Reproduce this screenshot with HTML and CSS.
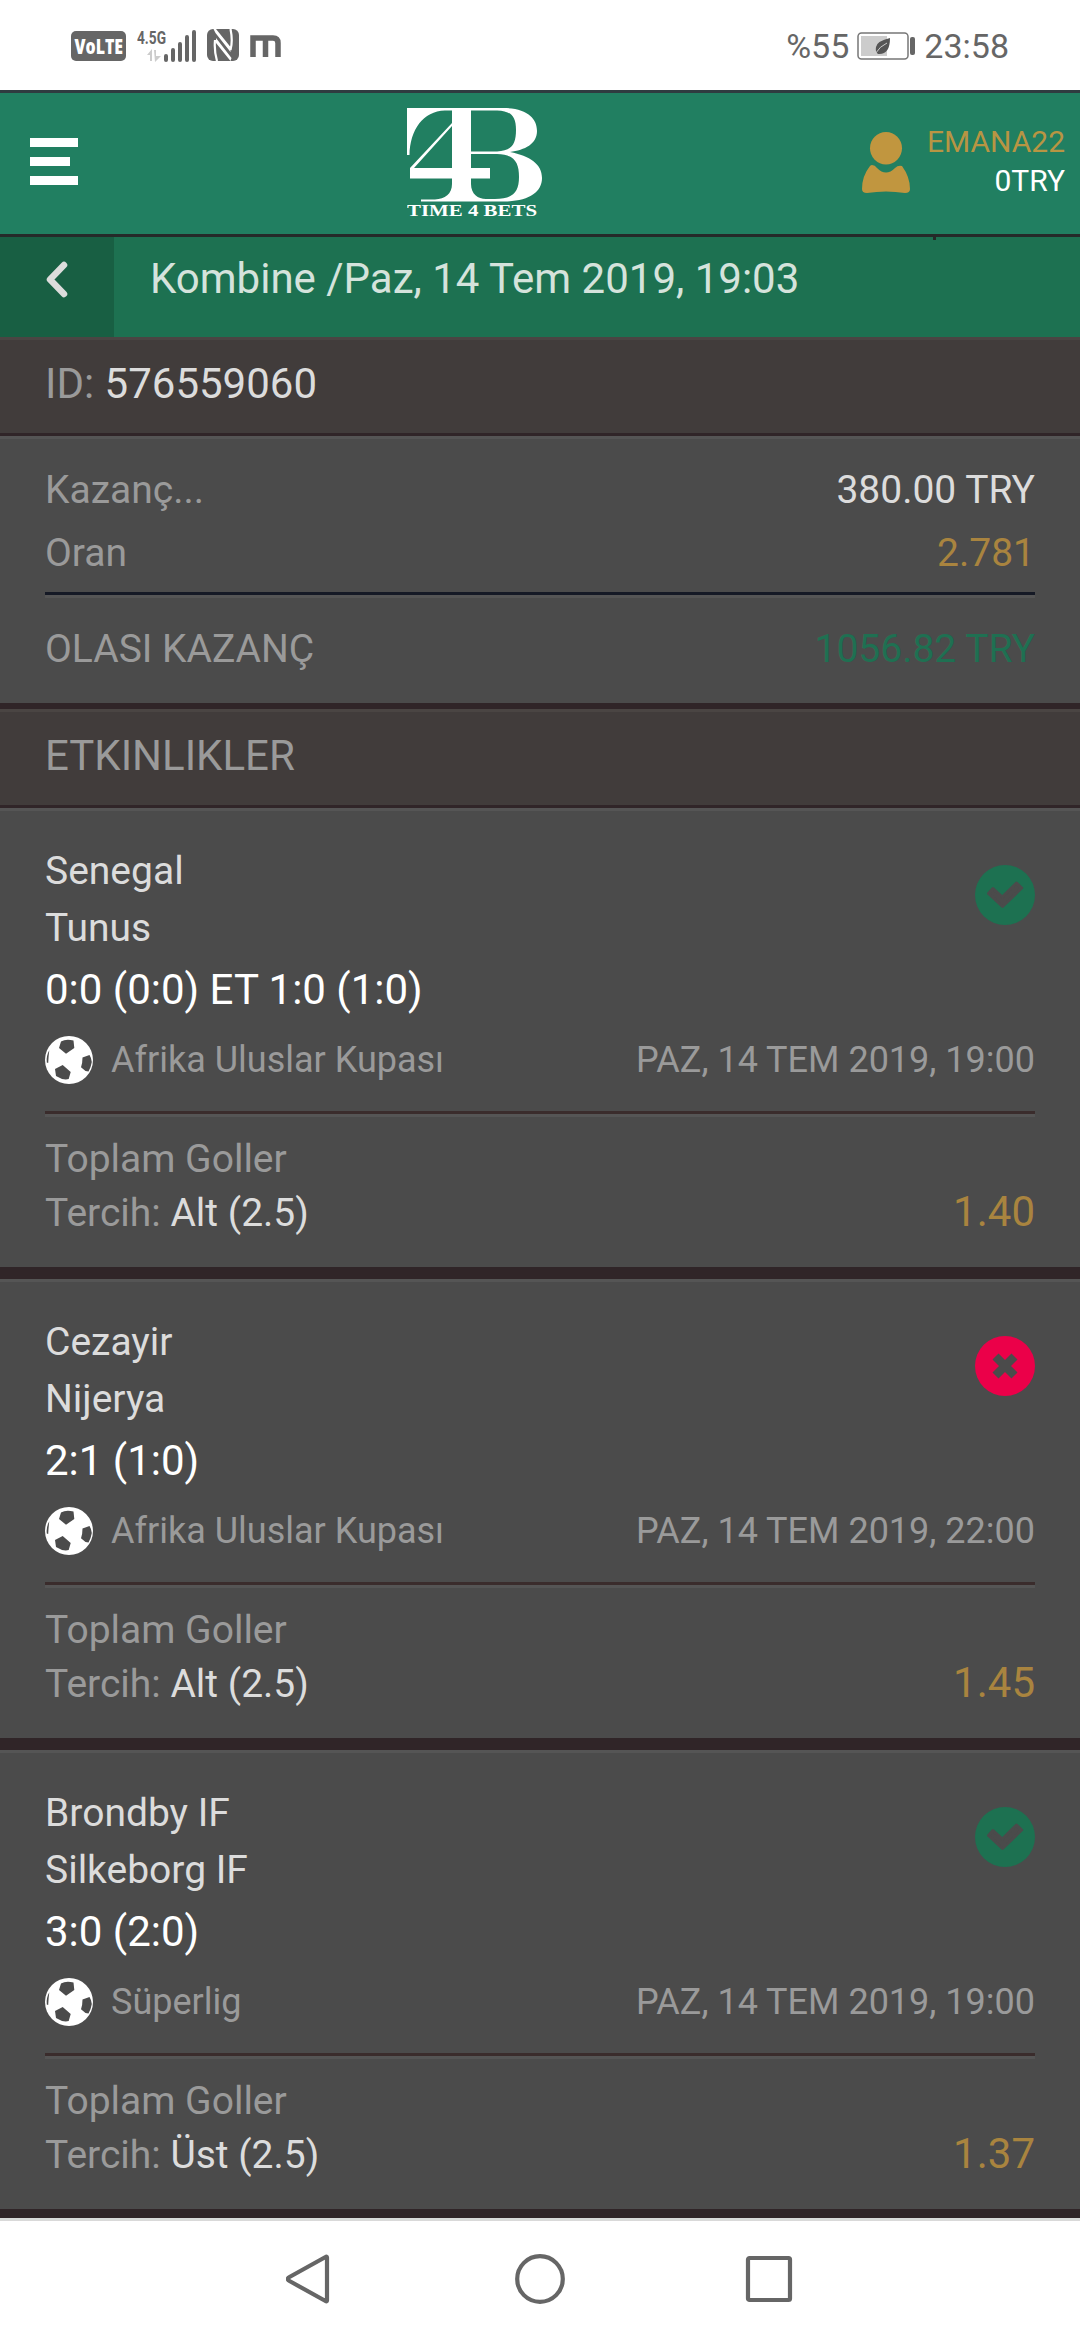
FILE: index.html
```html
<!DOCTYPE html>
<html lang="tr">
<head>
<meta charset="utf-8">
<title>Kombine</title>
<link rel="stylesheet" href="styles.css">
</head>
<body>
<svg class="defs" aria-hidden="true">
  <symbol id="ball" viewBox="0 0 48 48">
    <circle cx="24" cy="24" r="24" fill="#fff"/>
    <path d="M14 12L16 5.500Q21 2.500 28.500 4.500L29.300 12L21 17.700ZM37.500 21.500L44.500 19Q46.500 22 46.800 26Q46 31 43.500 35.500L40.500 35L36 31.300Q37.500 27 37.500 21.500ZM10 33L17.700 29L25.700 36L23.700 43Q18 44.500 11 40ZM4.300 14.300Q3.500 20 3.200 27L1.800 26.500Q1 20 4.300 14.300Z" fill="#4b4b4b"/>
  </symbol>
  <symbol id="won" viewBox="0 0 60 60">
    <circle cx="30" cy="30" r="30" fill="#1d7151"/>
    <path d="M13.500 28.500L18 23.500L27.300 32L41.500 18L46.700 23L27.500 41.500Z" fill="#4b4b4b" stroke="#4b4b4b" stroke-width="3" stroke-linejoin="round"/>
  </symbol>
  <symbol id="lost" viewBox="0 0 60 60">
    <circle cx="30" cy="30" r="30" fill="#eb0049"/>
    <path d="M20.500 20.500L39.500 39.500M39.500 20.500L20.500 39.500" stroke="#4b4b4b" stroke-width="8.500"/>
  </symbol>
</svg>

<div class="status">
  <div class="status-left">
    <svg class="volte" width="55" height="30" viewBox="0 0 55 30">
      <rect width="55" height="30" rx="5" fill="#666"/>
      <text x="3.500" y="23" textLength="48.500" lengthAdjust="spacingAndGlyphs">VoLTE</text>
    </svg>
    <svg class="signal" width="62" height="40" viewBox="0 -6 62 40">
      <text x="0" y="15" class="net" textLength="29" lengthAdjust="spacingAndGlyphs">4.5G</text>
      <path d="M10 26L15 20V32H13V26ZM17 21H19V27H24L18 33Z" fill="#ccc"/>
      <path d="M29 27V31M36 21V31M43 15V31M50 8V31M57 3V31" stroke="#666" stroke-width="4" stroke-linecap="round"/>
    </svg>
    <svg class="nfc" width="32" height="32" viewBox="0 0 32 32">
      <rect width="32" height="32" rx="6" fill="#666"/>
      <path d="M8 11Q7 22 10 32M23.500 0Q26 12 23.500 21" stroke="#fff" stroke-width="2.200" fill="none"/>
      <path d="M6.500 0H9L23.500 18V23L8.500 4ZM9 9L24.500 29L23.500 32L9 14Z" fill="#fff"/>
    </svg>
    <svg class="mark" width="31" height="22" viewBox="0 0 31 22">
      <path d="M3 22V3H23Q28 3 28 8V22M15.500 3V22" fill="none" stroke="#666" stroke-width="5.500"/>
    </svg>
  </div>
  <div class="status-right">
    <span>%55</span>
    <svg class="battery" width="60" height="28" viewBox="0 0 60 28">
      <rect x="1" y="1" width="50" height="26" rx="3.500" fill="#fff" stroke="#777" stroke-width="1.500"/>
      <rect x="4" y="4" width="26" height="20" fill="#ccc"/>
      <path d="M33 6Q20 9 19 15Q18 20 21 22Q33 23 33 6Z" fill="#555"/>
      <path d="M18 22Q23 14 30 11" stroke="#ccc" stroke-width="1" fill="none"/>
      <rect x="53" y="5" width="5" height="18" rx="2" fill="#666"/>
    </svg>
    <span>23:58</span>
  </div>
</div>

<header class="header">
  <div class="menu"><i></i><i class="short"></i><i></i></div>
  <svg class="logo" width="136" height="118" viewBox="0 0 136 118">
    <path fill="#fff" fill-rule="evenodd" d="M0 0H96C120 0 130 10 130 23C130 36 118 42 103 44C123 48 135 56 135 70C135 84 122 93 98 93.500H14V91.500H28C38 91 45 86 45 76V70.500H3V60L45 15V2.500H38C16 3 3 22 2.500 47H0ZM45 18L7 60H45ZM64 2.500V43.500H90C104 43 109 37 109 22C109 8 104 3 90 2.500ZM64 46V60H83V70.500H64V76C64 86 71 91 79 91H88C106 91 112 84 112 69C112 54 107 46.500 90 46Z"/>
    <text x="0" y="108" class="logo-text" textLength="130" lengthAdjust="spacingAndGlyphs">TIME 4 BETS</text>
  </svg>
  <div class="account">
    <svg width="48" height="61" viewBox="0 0 48 61" fill="#c1963f">
      <ellipse cx="24" cy="16.300" rx="16" ry="16.200"/>
      <path d="M10 33Q13 33 15 36Q24 45 33 36Q36 33 40 34Q48 45 48 57Q48 61 43 61Q24 58 5 61Q0 61 0 57Q0 44 8 34Q9 33 10 33Z"/>
    </svg>
    <div class="who"><span class="gold-name">EMANA22</span><span>0TRY</span></div>
  </div>
</header>

<div class="titlebar">
  <div class="back">
    <svg width="22" height="37" viewBox="0 0 22 37"><path d="M18 4L4 18.500L18 33" fill="none" stroke="#dcdcdc" stroke-width="6.500" stroke-linecap="round" stroke-linejoin="round"/></svg>
  </div>
  <div class="title">Kombine /Paz, 14 Tem 2019, 19:03</div>
  <i class="tick"></i>
</div>

<div class="band">ID: <b>576559060</b></div>
<section class="summary">
  <div class="row"><span>Kazanç...</span><b>380.00 TRY</b></div>
  <div class="row"><span>Oran</span><span class="gold">2.781</span></div>
  <div class="rule navy"></div>
  <div class="row total"><span>OLASI KAZANÇ</span><span class="win">1056.82 TRY</span></div>
</section>
<div class="band">ETKINLIKLER</div>

<article class="event">
  <div class="top"><div class="teams"><div>Senegal</div><div>Tunus</div><div class="score">0:0 (0:0) ET 1:0 (1:0)</div></div><svg class="result"><use href="#won"/></svg></div>
  <div class="meta"><svg class="ball"><use href="#ball"/></svg><span class="league">Afrika Uluslar Kupası</span><span>PAZ, 14 TEM 2019, 19:00</span></div>
  <div class="rule"></div>
  <div class="pick"><div>Toplam Goller</div><div class="row"><span>Tercih: <b>Alt (2.5)</b></span><span class="gold odds">1.40</span></div></div>
</article>
<article class="event">
  <div class="top"><div class="teams"><div>Cezayir</div><div>Nijerya</div><div class="score">2:1 (1:0)</div></div><svg class="result"><use href="#lost"/></svg></div>
  <div class="meta"><svg class="ball"><use href="#ball"/></svg><span class="league">Afrika Uluslar Kupası</span><span>PAZ, 14 TEM 2019, 22:00</span></div>
  <div class="rule"></div>
  <div class="pick"><div>Toplam Goller</div><div class="row"><span>Tercih: <b>Alt (2.5)</b></span><span class="gold odds">1.45</span></div></div>
</article>
<article class="event">
  <div class="top"><div class="teams"><div>Brondby IF</div><div>Silkeborg IF</div><div class="score">3:0 (2:0)</div></div><svg class="result"><use href="#won"/></svg></div>
  <div class="meta"><svg class="ball"><use href="#ball"/></svg><span class="league">Süperlig</span><span>PAZ, 14 TEM 2019, 19:00</span></div>
  <div class="rule"></div>
  <div class="pick"><div>Toplam Goller</div><div class="row"><span>Tercih: <b>Üst (2.5)</b></span><span class="gold odds">1.37</span></div></div>
</article>

<nav class="nav">
  <svg width="50" height="50" viewBox="0 0 50 50"><path d="M41 3.500V46.500Q41 48 39.500 47L3.500 27Q0 25 3.500 23L39.500 3Q41 2 41 3.500Z"/></svg>
  <svg width="50" height="50" viewBox="0 0 50 50"><circle cx="25" cy="25" r="22.800"/></svg>
  <svg width="50" height="50" viewBox="0 0 50 50"><rect x="4" y="4" width="42" height="42" rx="1.500"/></svg>
</nav>
</body>
</html>
```
FILE: styles.css
```css
* { box-sizing: border-box; }
body {
  margin: 0;
  width: 1080px;
  height: 2340px;
  overflow: hidden;
  background: #302528;
  color: #9a9a9a;
  font: 39px/57px Roboto, sans-serif;
  display: flex;
  flex-direction: column;
}
b { font-weight: 400; color: #dcdcdc; }
svg { display: block; flex: none; }
.defs { position: absolute; width: 0; height: 0; }

.status {
  height: 90px;
  background: #fff;
  color: #666;
  display: flex;
  justify-content: space-between;
  align-items: flex-start;
  padding: 22px 71px 0;
}
.status-left, .status-right { display: flex; align-items: flex-start; }
.volte { margin-top: 9px; }
.volte text { font: 800 21px "Open Sans", sans-serif; fill: #fff; }
.signal { margin: 1px 0 0 11px; }
.net { font: 700 19px Roboto, sans-serif; fill: #666; }
.nfc { margin: 7px 0 0 8px; }
.mark { margin: 13px 0 0 11px; }
.status-right { padding-top: 6px; font-size: 34px; line-height: 37px; }
.battery { margin: 4px 7px 0 8px; }

.header {
  height: 147px;
  border-top: 3px solid #2f3b40;
  border-bottom: 3px solid #252a29;
  background: #217f61;
  display: grid;
  grid-template-columns: 407px 1fr auto;
  padding-right: 15px;
}
.menu { padding: 45px 0 0 30px; display: flex; flex-direction: column; gap: 10px; }
.menu i { width: 48px; height: 9px; background: #fff; }
.menu .short { width: 40px; }
.logo { margin-top: 15px; }
.logo-text { font: 700 17px "Liberation Serif", serif; fill: #fff; }
.account { display: flex; gap: 17px; }
.account svg { margin-top: 38.500px; }
.who {
  display: flex;
  flex-direction: column;
  padding-top: 29px;
  text-align: right;
  font-size: 30px;
  line-height: 39px;
  color: #fff;
}
.gold-name { color: #b89543; }

.titlebar {
  position: relative;
  height: 100px;
  background: #1d7151;
  color: #d5e3dc;
  display: flex;
  font-size: 42px;
  line-height: 83px;
}
.back { width: 114px; background: #185f43; padding: 24px 0 0 46px; }
.title { padding-left: 36px; }
.tick { position: absolute; left: 933px; top: 0; width: 3px; height: 3px; background: #252a29; }

.band {
  height: 99px;
  border-top: 3px solid #4a4543;
  border-bottom: 3px solid #302528;
  background: #413c3b;
  padding: 0 45px;
  font-size: 42px;
  line-height: 87px;
}
.summary {
  height: 273px;
  border-top: 3px solid #555;
  border-bottom: 6px solid #302528;
  background: #4b4b4b;
  padding: 20px 45px 0;
  line-height: 63px;
}
.row { display: flex; justify-content: space-between; align-items: baseline; }
.rule { height: 6px; border-top: 3px solid #3a2c2c; border-bottom: 3px solid #555; }
.navy { margin-top: 7px; border-top-color: #151925; }
.total { margin-top: 20px; }
.gold { color: #a9843f; }
.win { color: #1f7052; }

.event {
  height: 471px;
  flex: none;
  border-top: 3px solid #555;
  border-bottom: 12px solid #302528;
  background: #4b4b4b;
  padding: 32px 45px 0;
}
.top { display: flex; justify-content: space-between; color: #dcdcdc; }
.score { margin-top: 3px; font-size: 42px; line-height: 60px; color: #fff; }
.result { width: 60px; height: 60px; margin-top: 22px; }
.meta {
  display: flex;
  margin: 16px 0 27px;
  font-size: 36px;
  line-height: 48px;
}
.ball { width: 48px; height: 48px; }
.league { flex: 1; padding-left: 18px; }
.pick { padding-top: 15px; line-height: 54px; }
.pick .row { margin-top: -1px; }
.odds { font-size: 42px; }

.nav {
  position: relative;
  height: 122px;
  margin-top: -3px;
  border-top: 3px solid #d9d9d9;
  background: #fff;
  display: flex;
  justify-content: center;
  gap: 179px;
  padding-top: 33px;
}
.nav svg { fill: none; stroke: #666; stroke-width: 4.200px; }
```
